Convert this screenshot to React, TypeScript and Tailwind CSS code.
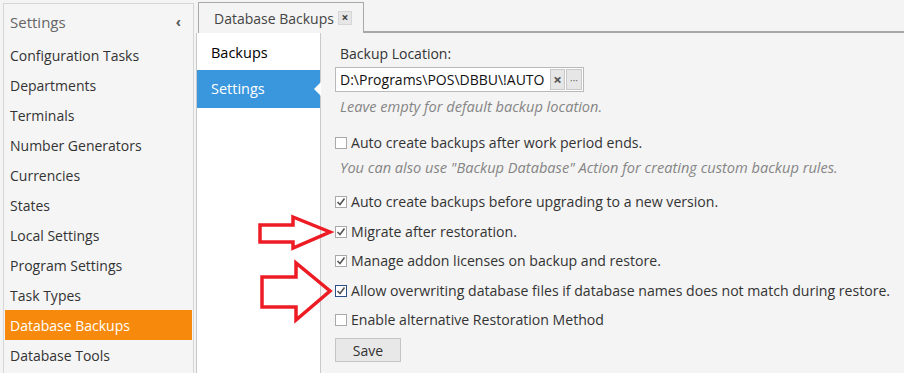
import React from 'react';

const font = { fontFamily: '"Open Sans", "Noto Sans", sans-serif' };

const menuItems = [
  'Configuration Tasks',
  'Departments',
  'Terminals',
  'Number Generators',
  'Currencies',
  'States',
  'Local Settings',
  'Program Settings',
  'Task Types',
  'Database Backups',
  'Database Tools',
];

function CheckBox({ checked, focused }: { checked: boolean; focused?: boolean }) {
  return (
    <span
      className={`w-[12px] h-[12px] shrink-0 bg-white border flex items-center justify-center ${
        focused ? 'border-[#2c4f86]' : 'border-[#a9a9a9]'
      }`}
    >
      {checked && (
        <svg width="10" height="10" viewBox="0 0 10 10">
          <polyline points="1.5,5 4,7.5 8.5,1.5" fill="none" stroke="#555" strokeWidth="1.6" />
        </svg>
      )}
    </span>
  );
}

function Row({
  label,
  checked,
  focused,
  className = '',
}: {
  label: string;
  checked: boolean;
  focused?: boolean;
  className?: string;
}) {
  return (
    <div className={`flex items-center gap-[4px] h-[20px] text-[14.1px] text-[#333] ${className}`}>
      <CheckBox checked={checked} focused={focused} />
      <span className="whitespace-nowrap">{label}</span>
    </div>
  );
}

export default function App() {
  return (
    <div className="relative w-[904px] h-[373px] overflow-hidden bg-[#f4f4f4] flex" style={font}>
      {/* Sidebar */}
      <div className="ml-[3px] mt-[3px] w-[191px] shrink-0 bg-[#f5f5f5] border-l border-t border-r border-[#d6d6d6] flex flex-col">
        <div className="h-[36px] flex items-center justify-between pl-[6px] pr-[12px]">
          <span className="text-[15px] text-[#666]">Settings</span>
          <span className="text-[14px] font-bold text-[#555] leading-none">‹</span>
        </div>
        {menuItems.map((m) => (
          <div
            key={m}
            className={`h-[30px] mx-[1px] pl-[5px] flex items-center text-[14px] ${
              m === 'Database Backups' ? 'bg-[#f78a0c] text-white' : 'text-[#333]'
            }`}
          >
            {m}
          </div>
        ))}
      </div>

      {/* Main */}
      <div className="flex-1 ml-[2px] flex flex-col">
        <div className="h-[33px] flex items-end">
          <div className="ml-[2px] h-[31px] w-[166px] border border-b-0 border-[#a9a9a9] bg-[#f4f4f4] flex items-center pl-[15px] gap-[4px]">
            <span className="text-[14px] text-[#444] whitespace-nowrap">Database Backups</span>
            <span className="w-[14px] h-[14px] bg-[#e6e6e6] border border-[#d6d6d6] flex items-center justify-center text-[12px] font-bold text-[#444] leading-none">
              ×
            </span>
          </div>
          <div className="flex-1 border-b-2 border-[#a6a6a6]" />
        </div>

        <div className="flex-1 flex">
          {/* Sub nav */}
          <div className="w-[125px] bg-white border-r border-[#c9c9c9] flex flex-col border-l border-[#c9c9c9]">
            <div className="h-[37px] flex items-center pl-[14px] pt-[2px] text-[14.5px] text-black">Backups</div>
            <div className="relative h-[38px] flex items-center pl-[14px] text-[14.5px] text-white bg-[#3a96dd]">
              Settings
              <span className="absolute right-[-1px] top-[12px] w-0 h-0 border-y-[7px] border-y-transparent border-r-[7px] border-r-white" />
            </div>
          </div>

          {/* Content */}
          <div className="flex-1 pl-[14px] pt-[10px] flex flex-col">
            <div className="h-[20px] flex items-center pl-[5px] text-[14px] text-[#333]">Backup Location:</div>
            <div className="mt-[4px] w-[249px] h-[25px] border border-[#b9b9b9] bg-white flex items-center pl-[4px] pr-[1px]">
              <span className="flex-1 text-[14px] text-[#111] whitespace-nowrap">D:\Programs\POS\DBBU\!AUTO</span>
              <span className="w-[15px] h-[21px] bg-[#e6e6e6] border border-[#c8c8c8] flex items-center justify-center text-[15px] font-bold text-[#555] leading-none">
                ×
              </span>
              <span className="ml-[1px] w-[16px] h-[21px] bg-[#e6e6e6] border border-[#c8c8c8] flex items-center justify-center text-[10px] text-[#666] leading-none">
                ···
              </span>
            </div>
            <div className="mt-[5px] h-[20px] flex items-center pl-[5px] text-[14.6px] italic text-[#858585]">
              Leave empty for default backup location.
            </div>
            <Row className="mt-[16px]" label="Auto create backups after work period ends." checked={false} />
            <div className="mt-[5px] h-[20px] flex items-center pl-[5px] text-[14.6px] italic text-[#858585] whitespace-nowrap">
              You can also use "Backup Database" Action for creating custom backup rules.
            </div>
            <Row className="mt-[14px]" label="Auto create backups before upgrading to a new version." checked />
            <Row className="mt-[10px]" label="Migrate after restoration." checked />
            <Row className="mt-[9px]" label="Manage addon licenses on backup and restore." checked />
            <Row
              className="mt-[10px]"
              label="Allow overwriting database files if database names does not match during restore."
              checked
              focused
            />
            <Row className="mt-[9px]" label="Enable alternative Restoration Method" checked={false} />
            <button className="mt-[8px] w-[66px] h-[24px] bg-[#e8e8e8] border border-[#c4c4c4] text-[14px] text-[#333] flex items-center justify-center">
              Save
            </button>
          </div>
        </div>
      </div>

      {/* Annotation arrows */}
      <svg className="absolute left-0 top-0 pointer-events-none" width="904" height="373">
        <polygon
          points="260,225 293,225 293,217 330,232 293,248 293,242 260,242"
          fill="none"
          stroke="#ed1c24"
          strokeWidth="3.5"
          strokeLinejoin="miter"
        />
        <polygon
          points="262,277 296,277 296,263 330,291 296,320 296,307 262,307"
          fill="none"
          stroke="#ed1c24"
          strokeWidth="3.5"
          strokeLinejoin="miter"
        />
      </svg>
    </div>
  );
}
